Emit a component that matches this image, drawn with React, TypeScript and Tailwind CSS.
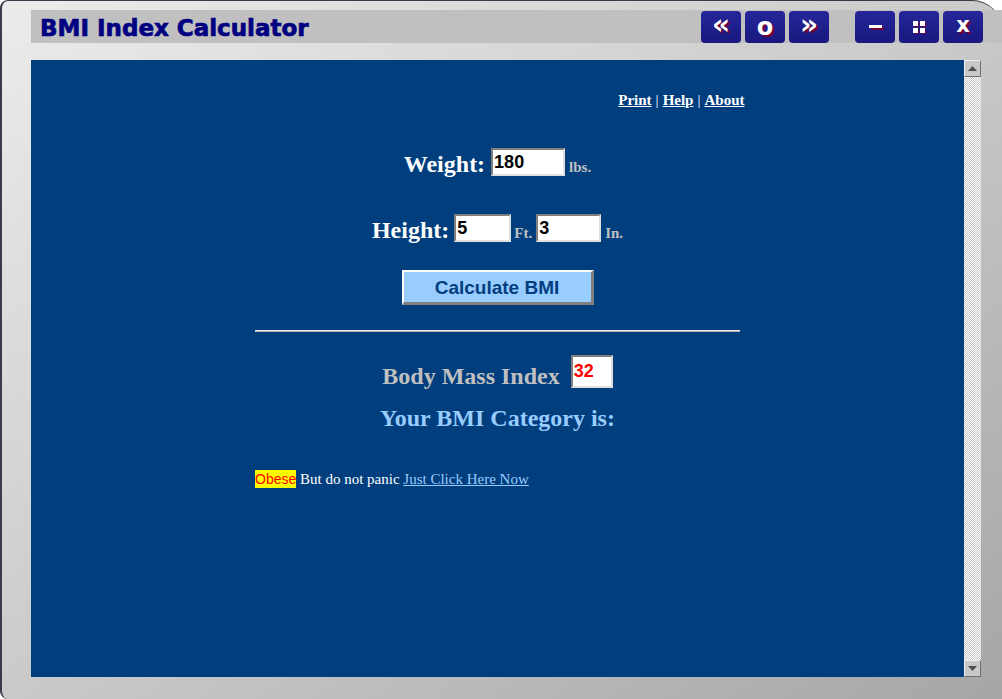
import React from "react";

const serif = { fontFamily: '"Liberation Serif", "Times New Roman", serif' };

function WinBtn({ children, size = "text-[24px]" }: { children: React.ReactNode; size?: string }) {
  return (
    <div className={`w-[40px] h-[32px] rounded-[4px] bg-gradient-to-b from-[#26269a] to-[#18187f] flex items-center justify-center text-white font-bold ${size} leading-none [text-shadow:2px_2px_0_#6e0034] [font-family:'DejaVu_Sans',sans-serif]`}>
      {children}
    </div>
  );
}

function ScrollBtn({ up }: { up: boolean }) {
  return (
    <div className="w-[17px] h-[17px] bg-[#c8c8c8] border-t border-l border-t-[#f0f0f0] border-l-[#f0f0f0] border-b border-r border-b-[#707070] border-r-[#707070] flex items-center justify-center">
      <svg width="9" height="5" viewBox="0 0 9 5">
        {up ? <polygon points="0,5 9,5 4.5,0" fill="#505050" /> : <polygon points="0,0 9,0 4.5,5" fill="#505050" />}
      </svg>
    </div>
  );
}

function Field({ value, w, red }: { value: string; w: string; red?: boolean }) {
  return (
    <input
      readOnly
      value={value}
      className={`${w} bg-white border-2 border-t-[#808080] border-l-[#808080] border-b-[#e0e0e0] border-r-[#e0e0e0] px-[1px] font-bold text-[18px] outline-none ${red ? "text-[#ff0000]" : "text-black"}`}
      style={{ fontFamily: '"Liberation Sans", Arial, sans-serif' }}
    />
  );
}

export default function App() {
  return (
    <div className="w-[1002px] h-[699px] bg-white overflow-hidden">
      <div className="w-full h-full rounded-tl-[8px] rounded-tr-[30px] rounded-bl-[8px] border-l-2 border-t border-[#3a3a48] bg-gradient-to-br from-[#ececec] via-[#cacaca] to-[#a6a6a6] flex flex-col">
        {/* title strip */}
        <div className="mt-[9px] ml-[29px] h-[33px] bg-[#c0c0c0] flex items-center justify-between pl-[9px] pr-[19px]">
          <div
            className="text-[#000080] font-bold text-[23px] leading-none mt-[4px] [-webkit-text-stroke:0.7px_#000080]"
            style={{ fontFamily: '"DejaVu Sans", Verdana, sans-serif' }}
          >
            BMI Index Calculator
          </div>
          <div className="flex items-center h-full">
            <div className="flex gap-[4px]">
              <WinBtn size="text-[28px]"><span className="mt-[-3px]">«</span></WinBtn>
              <WinBtn>o</WinBtn>
              <WinBtn size="text-[28px]"><span className="mt-[-3px]">»</span></WinBtn>
            </div>
            <div className="flex gap-[4px] ml-[26px]">
              <WinBtn>
                <div className="w-[13px] h-[3px] bg-white shadow-[2px_2px_0_#6e0034]" />
              </WinBtn>
              <WinBtn>
                <div className="grid grid-cols-2 gap-[2px]">
                  <div className="w-[5px] h-[5px] bg-white shadow-[1px_1px_0_#6e0034]" />
                  <div className="w-[5px] h-[5px] bg-white shadow-[1px_1px_0_#6e0034]" />
                  <div className="w-[5px] h-[5px] bg-white shadow-[1px_1px_0_#6e0034]" />
                  <div className="w-[5px] h-[5px] bg-white shadow-[1px_1px_0_#6e0034]" />
                </div>
              </WinBtn>
              <WinBtn size="text-[21px]">
                <span className="mt-[-3px]">x</span>
              </WinBtn>
            </div>
          </div>
        </div>

        {/* body */}
        <div className="mt-[17px] ml-[29px] flex">
          <div className="w-[933px] h-[617px] bg-[#003e7e] flex flex-col items-center" style={serif}>
            <div className="w-[486px] mt-[32px] h-[16px] flex justify-end text-white text-[15px] leading-[16px] mr-[-8px]">
              <span className="font-bold underline">Print</span>
              <span className="mx-[4px]">|</span>
              <span className="font-bold underline">Help</span>
              <span className="mx-[4px]">|</span>
              <span className="font-bold underline">About</span>
            </div>

            <div className="mt-[40px] h-[28px] flex items-end">
              <span className="text-white font-bold text-[24px] leading-none">Weight:</span>
              <span className="ml-[6px] h-[28px] flex"><Field value="180" w="w-[74px] h-[28px]" /></span>
              <span className="ml-[4px] text-[#c0c0c0] font-bold text-[15px] leading-none pb-[1px]">lbs.</span>
            </div>

            <div className="mt-[38px] h-[28px] flex items-end">
              <span className="text-white font-bold text-[24px] leading-none">Height:</span>
              <span className="ml-[5px] flex"><Field value="5" w="w-[57px] h-[28px]" /></span>
              <span className="ml-[3px] text-[#c0c0c0] font-bold text-[15px] leading-none pb-[1px]">Ft.</span>
              <span className="ml-[4px] flex"><Field value="3" w="w-[65px] h-[28px]" /></span>
              <span className="ml-[4px] text-[#c0c0c0] font-bold text-[15px] leading-none pb-[1px]">In.</span>
            </div>

            <div
              className="mt-[28px] w-[192px] h-[35px] bg-[#99ccff] border-t-2 border-l-2 border-t-white border-l-white border-b-[3px] border-r-[3px] border-b-[#808080] border-r-[#808080] flex items-center justify-center text-[#003e7e] font-bold text-[19px] leading-none"
              style={{ fontFamily: '"Liberation Sans", Arial, sans-serif' }}
            >
              Calculate BMI
            </div>

            <div className="mt-[25px] w-[485px] h-[2px] border-t border-t-[#f0f0f0] border-b border-b-[#b0b0b0]" />

            <div className="mt-[23px] h-[33px] flex items-center">
              <span className="text-[#c0c0c0] font-bold text-[24px] leading-none mt-[8px]">Body Mass Index</span>
              <span className="ml-[11px] flex">
                <Field value="32" w="w-[42px] h-[33px]" red />
              </span>
            </div>

            <div className="mt-[17px] h-[26px] text-[#99ccff] font-bold text-[24px] leading-[26px]">
              Your BMI Category is:
            </div>

            <div className="mt-[40px] w-[485px] h-[16px] flex items-center text-[15px] leading-[16px] text-white whitespace-pre">
              <span
                className="bg-[#ffff00] text-[#ff0000] text-[14px] leading-[18px] px-0"
                style={{ fontFamily: '"Liberation Sans", Arial, sans-serif' }}
              >
                Obese
              </span>
              <span> But do not panic </span>
              <span className="text-[#99ccff] underline">Just Click Here Now</span>
            </div>
          </div>

          <div className="w-[17px] h-[617px] flex flex-col justify-between bg-[repeating-conic-gradient(#c8c8c8_0_25%,#ffffff_0_50%)] bg-[length:2px_2px]">
            <ScrollBtn up />
            <ScrollBtn up={false} />
          </div>
        </div>
      </div>
    </div>
  );
}
